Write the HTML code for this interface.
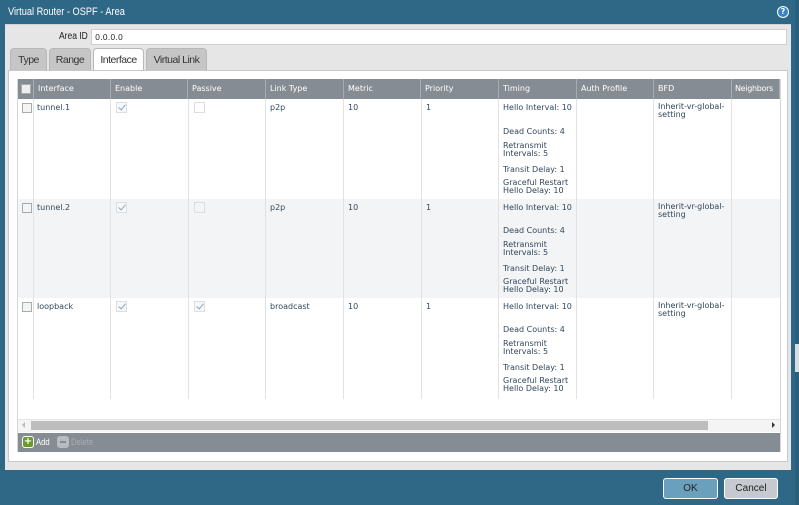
<!DOCTYPE html><html><head><style>
*{margin:0;padding:0;box-sizing:border-box}
body{width:799px;height:505px;background:#2f6886;font-family:"DejaVu Sans",sans-serif;font-size:8px;color:#33475b;position:relative;overflow:hidden}
.a{position:absolute}
.title{left:8px;top:6px;color:#fff;font-size:11px;font-family:"Liberation Sans",sans-serif;transform:scaleX(0.84);transform-origin:left}
.panel{left:5px;top:24px;width:786px;height:446px;background:#e6e6e6;border-top:1px solid #cfd3d6}
.tab{top:48px;height:22px;background:#c6c6c6;border:1px solid #b8b8b8;border-bottom:none;border-radius:4px 4px 0 0;font-family:"Liberation Sans",sans-serif;font-size:10.5px;color:#333;text-align:center;line-height:22px;letter-spacing:-0.5px}
.content{left:8px;top:70px;width:780px;height:392px;background:#fff;border:1px solid #c8c8c8}
.th{top:79px;height:20px;background:#868c93;color:#fff;line-height:20px;padding-left:4px;border-right:1px solid #a7acb1}
.vl{width:1px;background:#e0e2e4;top:99px;height:300px}
.cb{width:10px;height:10px;border:1px solid #a9acaf;background:#f4f4f4}
.ck{width:11px;height:11px;border:1px solid #dcdfe1;background:#f7f8f9}
.ck:after{content:"";position:absolute;left:3px;top:0px;width:3px;height:6px;border:solid #8fa3b3;border-width:0 1.5px 1.5px 0;transform:rotate(40deg)}
.t{line-height:8px}
.btn{top:478px;height:21px;border:1px solid #fff;border-radius:3px;font-family:"Liberation Sans",sans-serif;font-size:10px;text-align:center;line-height:19px;color:#222}
</style></head><body>
<div class="a title">Virtual Router - OSPF - Area</div>
<div class="a" style="left:777px;top:6px;width:12px;height:12px;border-radius:50%;background:#fff;"><div class="a" style="left:1px;top:1px;width:10px;height:10px;border-radius:50%;background:#3a83c2;color:#fff;font-size:8px;font-weight:bold;text-align:center;line-height:10px">?</div></div>
<div class="a" style="left:795px;top:0;width:4px;height:505px;background:#2a5f7c"></div>
<div class="a" style="left:795px;top:344px;width:4px;height:28px;background:#d8dde0"></div>
<div class="a panel"></div>
<div class="a" style="left:59px;top:31px;font-family:'Liberation Sans',sans-serif;font-size:10px;color:#222;transform:scaleX(0.85);transform-origin:left">Area ID</div>
<div class="a" style="left:91px;top:29px;width:696px;height:16px;background:#fff;border:1px solid #cfcfcf;font-size:8px;padding:3px 3px;color:#333">0.0.0.0</div>
<div class="a tab" style="left:10px;width:37px">Type</div>
<div class="a tab" style="left:49px;width:42px">Range</div>
<div class="a tab" style="left:93px;width:51px;background:#fff;height:23px">Interface</div>
<div class="a tab" style="left:146px;width:61px">Virtual Link</div>
<div class="a content"></div>
<div class="a" style="left:17px;top:79px;width:764px;height:373px;border:1px solid #d4d6d8"></div>
<div class="a th" style="left:18px;width:16px;padding:0"><div class="a cb" style="left:3px;top:5px;background:#eee"></div></div>
<div class="a th" style="left:34px;width:77px">Interface</div>
<div class="a th" style="left:111px;width:77px">Enable</div>
<div class="a th" style="left:188px;width:78px">Passive</div>
<div class="a th" style="left:266px;width:78px">Link Type</div>
<div class="a th" style="left:344px;width:77px">Metric</div>
<div class="a th" style="left:421px;width:78px">Priority</div>
<div class="a th" style="left:499px;width:78px">Timing</div>
<div class="a th" style="left:577px;width:77px">Auth Profile</div>
<div class="a th" style="left:654px;width:78px">BFD</div>
<div class="a th" style="left:732px;width:48px;overflow:hidden;padding-left:3px;letter-spacing:-0.3px">Neighbors</div>
<div class="a" style="left:18px;top:199px;width:762px;height:99px;background:#f3f4f5"></div>
<div class="a vl" style="left:33px"></div><div class="a vl" style="left:110px"></div><div class="a vl" style="left:188px"></div><div class="a vl" style="left:265px"></div><div class="a vl" style="left:343px"></div><div class="a vl" style="left:421px"></div><div class="a vl" style="left:498px"></div><div class="a vl" style="left:576px"></div><div class="a vl" style="left:653px"></div><div class="a vl" style="left:731px"></div>

<div class="a cb" style="left:22px;top:103px"></div>
<div class="a" style="left:37px;top:103px">tunnel.1</div>
<div class="a ck" style="left:116px;top:102px"></div>
<div class="a" style="left:194px;top:102px;width:11px;height:11px;border:1px solid #dcdfe1"></div>
<div class="a" style="left:270px;top:103px">p2p</div><div class="a" style="left:348px;top:103px">10</div><div class="a" style="left:426px;top:103px">1</div>
<div class="a" style="left:503px;top:103px">Hello Interval: 10</div>
<div class="a" style="left:503px;top:127px">Dead Counts: 4</div>
<div class="a t" style="left:503px;top:142px">Retransmit<br>Intervals: 5</div>
<div class="a" style="left:503px;top:165px">Transit Delay: 1</div>
<div class="a t" style="left:503px;top:179px">Graceful Restart<br>Hello Delay: 10</div>
<div class="a t" style="left:658px;top:103px">Inherit-vr-global-<br>setting</div>

<div class="a cb" style="left:22px;top:203px"></div>
<div class="a" style="left:37px;top:203px">tunnel.2</div>
<div class="a ck" style="left:116px;top:202px"></div>
<div class="a" style="left:194px;top:202px;width:11px;height:11px;border:1px solid #dcdfe1"></div>
<div class="a" style="left:270px;top:203px">p2p</div><div class="a" style="left:348px;top:203px">10</div><div class="a" style="left:426px;top:203px">1</div>
<div class="a" style="left:503px;top:203px">Hello Interval: 10</div>
<div class="a" style="left:503px;top:226px">Dead Counts: 4</div>
<div class="a t" style="left:503px;top:241px">Retransmit<br>Intervals: 5</div>
<div class="a" style="left:503px;top:264px">Transit Delay: 1</div>
<div class="a t" style="left:503px;top:278px">Graceful Restart<br>Hello Delay: 10</div>
<div class="a t" style="left:658px;top:203px">Inherit-vr-global-<br>setting</div>

<div class="a cb" style="left:22px;top:302px"></div>
<div class="a" style="left:37px;top:302px">loopback</div>
<div class="a ck" style="left:116px;top:301px"></div>
<div class="a ck" style="left:194px;top:301px"></div>
<div class="a" style="left:270px;top:302px">broadcast</div><div class="a" style="left:348px;top:302px">10</div><div class="a" style="left:426px;top:302px">1</div>
<div class="a" style="left:503px;top:302px">Hello Interval: 10</div>
<div class="a" style="left:503px;top:325px">Dead Counts: 4</div>
<div class="a t" style="left:503px;top:340px">Retransmit<br>Intervals: 5</div>
<div class="a" style="left:503px;top:363px">Transit Delay: 1</div>
<div class="a t" style="left:503px;top:377px">Graceful Restart<br>Hello Delay: 10</div>
<div class="a t" style="left:658px;top:302px">Inherit-vr-global-<br>setting</div>

<div class="a" style="left:18px;top:419px;width:762px;height:13px;background:#f4f4f4;border-top:1px solid #e4e4e4"></div>
<div class="a" style="left:31px;top:421px;width:677px;height:9px;background:#bdbdbd"></div>
<div class="a" style="left:22px;top:422px;width:0;height:0;border:3px solid transparent;border-right-color:#bbb;border-left:none"></div>
<div class="a" style="left:772px;top:422px;width:0;height:0;border:3px solid transparent;border-left-color:#333;border-right:none"></div>
<div class="a" style="left:18px;top:433px;width:762px;height:19px;background:#868c93"></div>
<div class="a" style="left:22px;top:436px;width:12px;height:12px;border-radius:3px;background:#fff"><div class="a" style="left:1px;top:1px;width:10px;height:10px;border-radius:2px;background:#6a9a2a;color:#fff;font-weight:bold;font-size:10px;line-height:9px;text-align:center">+</div></div>
<div class="a" style="left:36px;top:437px;color:#fff;font-family:'Liberation Sans',sans-serif;font-size:9px;transform:scaleX(0.85);transform-origin:left">Add</div>
<div class="a" style="left:57px;top:436px;width:12px;height:12px;border-radius:3px;background:#b8bcc0"><div class="a" style="left:3px;top:5px;width:6px;height:2px;background:#868c93"></div></div>
<div class="a" style="left:71px;top:437px;color:#a8adb2;font-family:'Liberation Sans',sans-serif;font-size:9px;transform:scaleX(0.85);transform-origin:left">Delete</div>

<div class="a btn" style="left:663px;width:55px;background:#6ba0bc">OK</div>
<div class="a btn" style="left:724px;width:54px;background:#c6c9cf">Cancel</div>
</body></html>
